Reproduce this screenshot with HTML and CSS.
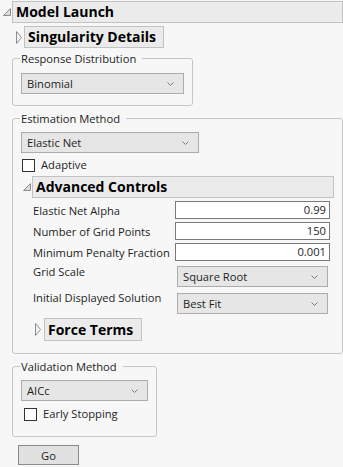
FILE: index.html
```html
<!DOCTYPE html>
<html lang="en">
<head>
    <meta charset="UTF-8">
    <meta name="viewport" content="width=device-width, initial-scale=1.0">
    <title>Model Launch</title>
    <link rel="stylesheet" href="styles.css">
</head>
<body>
    <div class="outline-head">
        <svg class="tri-open" width="10" height="10" viewBox="0 0 10 10"><polygon points="1.5,8.5 8.5,1.5 8.5,8.5" /></svg>
        <div class="title-box title-main">Model Launch</div>
    </div>

    <div class="launch-body">
        <div class="outline-head sub-head">
            <svg class="tri-closed" width="6" height="13" viewBox="0 0 6 13"><polygon points="0.5,0.5 5.5,6.5 0.5,12.5" /></svg>
            <div class="title-box title-sing">Singularity Details</div>
        </div>

        <fieldset class="group group-resp">
            <legend>Response Distribution</legend>
            <div class="combo combo-resp">
                <span>Binomial</span>
                <svg class="chev" width="7" height="4" viewBox="0 0 7 4"><polyline points="0.5,0.5 3.5,3.5 6.5,0.5" /></svg>
            </div>
        </fieldset>

        <fieldset class="group group-est">
            <legend>Estimation Method</legend>
            <div class="combo combo-est">
                <span>Elastic Net</span>
                <svg class="chev" width="7" height="4" viewBox="0 0 7 4"><polyline points="0.5,0.5 3.5,3.5 6.5,0.5" /></svg>
            </div>
            <label class="check check-adaptive"><span class="box"></span>Adaptive</label>

            <div class="outline-head adv-head">
                <svg class="tri-open" width="10" height="10" viewBox="0 0 10 10"><polygon points="1.5,8.5 8.5,1.5 8.5,8.5" /></svg>
                <div class="title-box title-adv">Advanced Controls</div>
            </div>

            <div class="adv-grid">
                <div class="lbl">Elastic Net Alpha</div>
                <div class="num">0.99</div>
                <div class="lbl">Number of Grid Points</div>
                <div class="num">150</div>
                <div class="lbl">Minimum Penalty Fraction</div>
                <div class="num">0.001</div>
                <div class="lbl lbl-top">Grid Scale</div>
                <div class="combo combo-adv combo-scale">
                    <span>Square Root</span>
                    <svg class="chev" width="7" height="4" viewBox="0 0 7 4"><polyline points="0.5,0.5 3.5,3.5 6.5,0.5" /></svg>
                </div>
                <div class="lbl lbl-top">Initial Displayed Solution</div>
                <div class="combo combo-adv combo-sol">
                    <span>Best Fit</span>
                    <svg class="chev" width="7" height="4" viewBox="0 0 7 4"><polyline points="0.5,0.5 3.5,3.5 6.5,0.5" /></svg>
                </div>
            </div>

            <div class="outline-head force-head">
                <svg class="tri-closed" width="6" height="13" viewBox="0 0 6 13"><polygon points="0.5,0.5 5.5,6.5 0.5,12.5" /></svg>
                <div class="title-box title-force">Force Terms</div>
            </div>
        </fieldset>

        <fieldset class="group group-val">
            <legend>Validation Method</legend>
            <div class="combo combo-val">
                <span>AICc</span>
                <svg class="chev" width="7" height="4" viewBox="0 0 7 4"><polyline points="0.5,0.5 3.5,3.5 6.5,0.5" /></svg>
            </div>
            <label class="check check-early"><span class="box"></span>Early Stopping</label>
        </fieldset>

        <button class="go-btn">Go</button>
    </div>
</body>
</html>
```

FILE: styles.css
```css
body {
    margin: 0;
    padding-top: 1px;
    background: #f7f7f7;
    font-family: "Open Sans", "Noto Sans", sans-serif;
    font-size: 11.2px;
    line-height: 15px;
    color: #1e1e1e;
}

/* outline headers (triangle + grey title box) */
.outline-head {
    display: flex;
    align-items: center;
}
.tri-open {
    margin-left: 2px;
}
.tri-open polygon {
    fill: #dcdcdc;
    stroke: #8c8c8c;
    stroke-width: 1;
}
.tri-closed polygon {
    fill: #f4f4f4;
    stroke: #8c8c8c;
    stroke-width: 1;
}
.title-box {
    box-sizing: border-box;
    height: 22px;
    background: #ebebeb;
    border: 1px solid #c2c2c2;
    font-size: 14px;
    font-weight: bold;
    line-height: 20px;
    padding-left: 3px;
    color: #000;
    white-space: nowrap;
}
.title-main {
    width: 331px;
}
.launch-body {
    padding-left: 12px;
}
.sub-head {
    margin-top: 3px;
    padding-left: 4px;
}
.title-sing {
    margin-left: 2px;
    width: 140px;
}

/* group boxes */
.group {
    box-sizing: border-box;
    margin: 0;
    border: 1px solid #c6c6c6;
    border-radius: 3px;
    padding: 0 8px;
}
.group legend {
    padding: 0 6px 0 1px;
    margin-left: -1px;
    line-height: 15px;
}
.group-resp {
    margin-top: 3px;
    width: 180px;
    padding-top: 7px;
    padding-bottom: 11px;
}
.group-est {
    margin-top: 5px;
    width: 327px;
    padding-top: 6px;
    padding-bottom: 12px;
}
.group-val {
    margin-top: 5px;
    width: 144px;
    padding-top: 6px;
    padding-bottom: 15px;
}

/* combo boxes */
.combo {
    box-sizing: border-box;
    height: 21px;
    display: flex;
    align-items: center;
    justify-content: space-between;
    background: #e6e6e6;
    border: 1px solid #acacac;
    padding: 0 9px 0 5px;
}
.chev polyline {
    fill: none;
    stroke: #7a7a7a;
    stroke-width: 1;
}
.combo-resp {
    width: 163px;
}
.combo-est {
    width: 178px;
}
.combo-val {
    width: 127px;
}
.combo-adv {
    width: 151px;
    margin-left: 2px;
}

/* checkboxes */
.check {
    display: flex;
    align-items: center;
    gap: 6px;
    height: 14px;
    line-height: 14px;
}
.check .box {
    box-sizing: border-box;
    width: 13px;
    height: 13px;
    background: #fff;
    border: 1px solid #333;
}
.check-adaptive {
    margin-top: 5px;
    margin-left: 1px;
}
.check-early {
    margin-top: 6px;
    margin-left: 3px;
}

/* advanced controls */
.adv-head {
    margin-top: 4px;
}
.adv-head .tri-open {
    margin-left: 1px;
}
.title-adv {
    width: 302px;
}
.adv-grid {
    display: grid;
    grid-template-columns: 142px 155px;
    row-gap: 3px;
    margin-top: 3px;
    padding-left: 12px;
}
.lbl {
    align-self: center;
    white-space: nowrap;
}
.lbl-top {
    align-self: start;
}
.num {
    box-sizing: border-box;
    height: 18px;
    background: #fff;
    border: 1px solid #7a7a7a;
    text-align: right;
    padding-right: 3px;
    line-height: 16px;
}
.combo-scale {
    margin-top: 2px;
}
.combo-sol {
    margin-top: 3px;
}
.force-head {
    margin-top: 4px;
    padding-left: 14px;
}
.title-force {
    margin-left: 3px;
    width: 98px;
    height: 23px;
    line-height: 21px;
}

.go-btn {
    display: block;
    margin: 8px 0 0 6px;
    width: 61px;
    height: 20px;
    background: #e1e1e1;
    border: 1px solid #8a8a8a;
    border-radius: 0;
    font-family: inherit;
    font-size: 11.2px;
    color: #1e1e1e;
    padding: 0;
}
```
